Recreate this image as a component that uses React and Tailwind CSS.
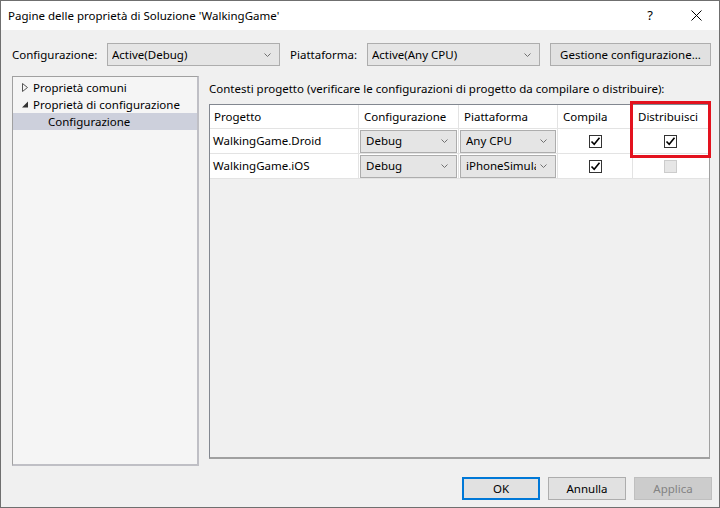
import React from 'react';

const font = { fontFamily: '"Noto Sans", "Open Sans", sans-serif' };

const Chevron = () => (
  <svg width="7" height="4" viewBox="0 0 7 4" className="shrink-0">
    <path d="M0.5 0.5 L3.5 3.5 L6.5 0.5" fill="none" stroke="#707070" strokeWidth="1" />
  </svg>
);

const Combo = ({ label, className }) => (
  <div
    className={`flex items-center justify-between h-[23px] pl-[4px] pr-[8px] bg-[#e5e5e5] border border-[#adadad] text-[#000] ${className}`}
  >
    <span className="overflow-hidden whitespace-nowrap flex-1 min-w-0 mr-[4px]">{label}</span>
    <Chevron />
  </div>
);

const Check = ({ checked, disabled }) => (
  <div
    className={`w-[13px] h-[13px] border flex items-center justify-center ${
      disabled ? 'border-[#cccccc] bg-[#e6e6e6]' : 'border-[#333333] bg-white'
    }`}
  >
    {checked && (
      <svg width="11" height="11" viewBox="0 0 11 11">
        <path d="M1.5 5.5 L4.2 8.3 L9.5 1.8" fill="none" stroke="#000" strokeWidth="1.6" />
      </svg>
    )}
  </div>
);

const rows = [
  { name: 'WalkingGame.Droid', config: 'Debug', platform: 'Any CPU', build: true, deploy: true, deployEnabled: true },
  { name: 'WalkingGame.iOS', config: 'Debug', platform: 'iPhoneSimula', build: true, deploy: false, deployEnabled: false },
];

const cols = 'grid grid-cols-[149px_100px_99px_75px_75px]';

const App = () => {
  return (
    <div
      className="w-[720px] h-[508px] flex flex-col bg-[#f0f0f0] border border-[#6f6f6f] text-[11.5px] text-black overflow-hidden"
      style={font}
    >
      {/* title bar */}
      <div className="h-[29px] bg-white flex items-center shrink-0">
        <span className="pl-[7px] flex-1">Pagine delle proprietà di Soluzione 'WalkingGame'</span>
        <span className="w-[46px] text-center text-[13px]">?</span>
        <span className="w-[46px] flex justify-center">
          <svg width="11" height="11" viewBox="0 0 11 11">
            <path d="M0.5 0.5 L10.5 10.5 M10.5 0.5 L0.5 10.5" stroke="#000" strokeWidth="1" />
          </svg>
        </span>
      </div>

      {/* toolbar */}
      <div className="flex items-center h-[23px] mt-[13px] pl-[11px] shrink-0">
        <span className="w-[95px]">Configurazione:</span>
        <Combo label="Active(Debug)" className="w-[173px]" />
        <span className="ml-[10px] w-[77px]">Piattaforma:</span>
        <Combo label="Active(Any CPU)" className="w-[173px]" />
        <div className="ml-[10px] w-[161px] h-[23px] flex items-center justify-center bg-[#e1e1e1] border border-[#adadad]">
          Gestione configurazione...
        </div>
      </div>

      {/* main */}
      <div className="flex mt-[10px] pl-[11px] shrink-0">
        {/* tree */}
        <div className="w-[187px] h-[390px] bg-[#f5f5f5] border border-[#a0a0a0] border-b-2 border-r-2 border-b-[#bfbfc5] border-r-[#bfbfc5] pt-[2px]">
          <div className="h-[17px] flex items-center pl-[8px]">
            <svg width="8" height="9" viewBox="0 0 8 9" className="mr-[4px]">
              <path d="M1.5 0.5 L6.5 4.5 L1.5 8.5 Z" fill="none" stroke="#555" strokeWidth="1" />
            </svg>
            <span>Proprietà comuni</span>
          </div>
          <div className="h-[17px] flex items-center pl-[8px]">
            <svg width="8" height="9" viewBox="0 0 8 9" className="mr-[4px]">
              <path d="M7 1.5 L7 7.5 L1 7.5 Z" fill="#333" />
            </svg>
            <span>Proprietà di configurazione</span>
          </div>
          <div className="h-[17px] flex items-center pl-[35px] bg-[#cdd0dc]">Configurazione</div>
        </div>

        {/* right */}
        <div className="ml-[10px] flex flex-col">
          <div className="h-[30px] flex items-center -mt-[2px]">
            Contesti progetto (verificare le configurazioni di progetto da compilare o distribuire):
          </div>
          <div className="relative w-[501px] h-[355px] bg-[#f0f0f0] border border-[#828790] border-b-2 border-b-[#a0a0a0] border-r-[#a0a0a0]">
            <div className={`${cols} h-[24px] bg-white border-b border-[#e3e3e3]`}>
              <div className="flex items-center pl-[4px] border-r border-[#e3e3e3]">Progetto</div>
              <div className="flex items-center pl-[5px] border-r border-[#e3e3e3]">Configurazione</div>
              <div className="flex items-center pl-[5px] border-r border-[#e3e3e3]">Piattaforma</div>
              <div className="flex items-center pl-[5px] border-r border-[#e3e3e3]">Compila</div>
              <div className="flex items-center pl-[5px]">Distribuisci</div>
            </div>
            {rows.map((r) => (
              <div key={r.name} className={`${cols} h-[25px] bg-white border-b border-[#e3e3e3]`}>
                <div className="flex items-center pl-[3px] border-r border-[#e3e3e3]">{r.name}</div>
                <div className="flex items-center px-[1px] border-r border-[#e3e3e3]">
                  <Combo label={r.config} className="w-full h-[22px] pl-[5px]" />
                </div>
                <div className="flex items-center px-[1px] border-r border-[#e3e3e3]">
                  <Combo label={r.platform} className="w-full h-[22px] pl-[5px]" />
                </div>
                <div className="flex items-center justify-center border-r border-[#e3e3e3]">
                  <Check checked={r.build} />
                </div>
                <div className="flex items-center justify-center">
                  <Check checked={r.deploy} disabled={!r.deployEnabled} />
                </div>
              </div>
            ))}
            <div className="absolute left-[420px] top-[-4px] w-[81px] h-[57px] border-[3px] border-[#e3121e]" />
          </div>
        </div>
      </div>

      {/* buttons */}
      <div className="flex justify-end gap-[8px] mt-[11px] pr-[7px] shrink-0">
        <div className="w-[78px] h-[23px] flex items-center justify-center bg-[#e1e1e1] border-2 border-[#0078d7]">OK</div>
        <div className="w-[78px] h-[23px] flex items-center justify-center bg-[#e1e1e1] border border-[#adadad]">Annulla</div>
        <div className="w-[78px] h-[23px] flex items-center justify-center bg-[#cccccc] border border-[#bfbfbf] text-[#838383]">
          Applica
        </div>
      </div>
    </div>
  );
};

export default App;
